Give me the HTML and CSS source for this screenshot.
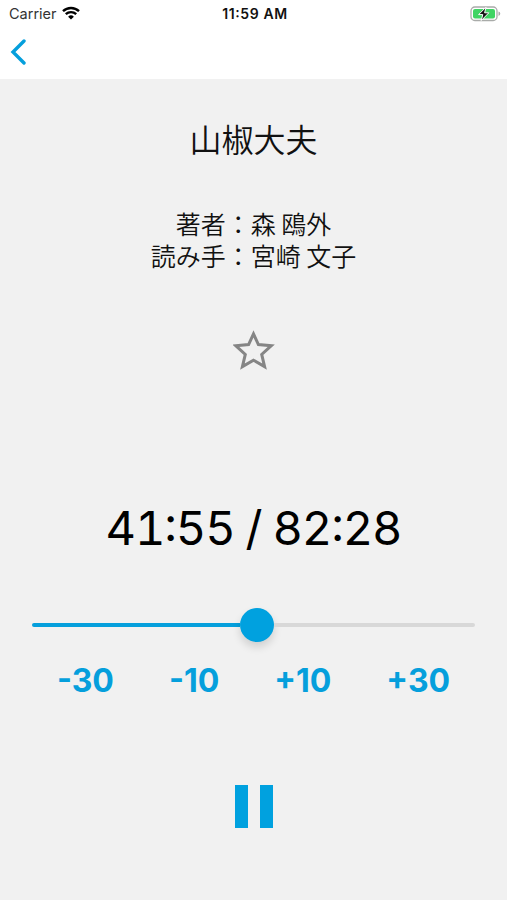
FILE: index.html
```
<!DOCTYPE html>
<html lang="ja">
<head>
<meta charset="UTF-8">
<meta name="viewport" content="width=device-width, initial-scale=1.0">
<title>山椒大夫</title>
<link rel="stylesheet" href="styles.css">
</head>
<body>

<header>
  <div class="status-bar">
    <div class="carrier">
      <span>Carrier</span>
      <svg class="wifi" viewBox="0 0 18 14" width="18" height="14">
        <path d="M1 5.2a11.5 11.5 0 0 1 16 0" />
        <path d="M3.8 8.2a7.6 7.6 0 0 1 10.4 0" />
        <path class="dot" d="M9 13.6L6.1 10.7a4.2 4.2 0 0 1 5.8 0z" />
      </svg>
    </div>
    <span class="clock">11:59 AM</span>
    <svg class="battery" viewBox="0 0 31 16" width="31" height="16">
      <rect x="1" y="1" width="26" height="13.5" rx="3.8" fill="#fff" stroke="#a9aba9" stroke-width="1.3" />
      <rect x="3" y="3" width="22" height="9.5" rx="2" fill="#3fd463" />
      <path d="M28.5 5.6v4.4q1.8-.6 1.8-2.2t-1.8-2.2z" fill="#a9aba9" />
      <path d="M16 1.2L8.6 8.6h4.2L11.2 14.6l7.6-7.8h-4.2z" fill="#111" stroke="#fff" stroke-width="1" />
    </svg>
  </div>
  <nav>
    <button class="back-btn" aria-label="戻る">
      <svg viewBox="0 0 16 26" width="16" height="26"><path d="M14 2L3 13l11 11" /></svg>
    </button>
  </nav>
</header>

<main>
  <h1>山椒大夫</h1>
  <div class="credits">
    <div>著者：森 鴎外</div>
    <div>読み手：宮崎 文子</div>
  </div>
  <button class="star-btn" aria-label="お気に入り">
    <svg viewBox="0 0 42 40" width="42" height="40">
      <path d="M20.5 3.8L25.4 14.6L38.3 15.7L28.7 24.4L31.6 36.6L20.5 30.2L9.4 36.6L12.3 24.4L2.7 15.7L15.6 14.6Z" />
    </svg>
  </button>
  <div class="time"><span>41:55</span><span class="slash">/</span><span>82:28</span></div>
  <div class="slider">
    <div class="played"></div>
    <div class="thumb"></div>
    <div class="remaining"></div>
  </div>
  <div class="skip">
    <button>-30</button>
    <button>-10</button>
    <button>+10</button>
    <button>+30</button>
  </div>
  <button class="pause-btn" aria-label="一時停止">
    <span></span>
    <span></span>
  </button>
</main>

</body>
</html>
```
FILE: styles.css
```
* {
  box-sizing: border-box;
}

body {
  margin: 0;
  min-height: 900px;
  font-family: Inter, "Noto Sans CJK JP", sans-serif;
  background-color: #f1f1f1;
  color: #111;
}

button {
  padding: 0;
  border: none;
  background: none;
  font-family: inherit;
  color: #059fdc;
  cursor: pointer;
}

svg {
  display: block;
}

header {
  height: 79px;
  background-color: #fff;
}

.status-bar {
  display: grid;
  grid-template-columns: 1fr auto 1fr;
  align-items: center;
  height: 27px;
  padding: 0 6px 0 9px;
  font-size: 14px;
  line-height: 27px;
}

.carrier {
  display: flex;
  align-items: center;
  gap: 5px;
  color: #333;
  font-size: 14.5px;
}

.wifi {
  margin-top: -2px;
  fill: none;
  stroke: #000;
  stroke-width: 2.4;
}

.wifi .dot {
  fill: #000;
  stroke: none;
}

.clock {
  font-weight: 600;
  letter-spacing: 0.6px;
  font-feature-settings: "case";
}

.battery {
  justify-self: end;
}

nav {
  padding: 12px 0 0 10px;
}

.back-btn path {
  fill: none;
  stroke: #059fdc;
  stroke-width: 3.4;
  stroke-linecap: round;
}

main {
  display: flex;
  flex-direction: column;
  align-items: center;
}

h1 {
  margin: 35px 0 0;
  font-size: 32px;
  font-weight: 350;
  line-height: 48px;
  font-family: "Noto Sans CJK JP", sans-serif;
}

.credits {
  margin-top: 45px;
  font-family: "Noto Sans CJK JP", sans-serif;
  font-size: 25px;
  font-weight: 350;
  line-height: 32px;
  text-align: center;
}

.star-btn {
  margin-top: 59px;
}

.star-btn path {
  fill: none;
  stroke: #858585;
  stroke-width: 3;
}

.time {
  display: flex;
  gap: 11px;
  margin-top: 130px;
  font-size: 47px;
  line-height: 56px;
  font-feature-settings: "tnum", "case";
  letter-spacing: -1.1px;
  color: #000;
}

.slider {
  display: flex;
  align-items: center;
  width: 443px;
  height: 34px;
  margin-top: 52px;
}

.played {
  width: 208px;
  height: 4px;
  border-radius: 2px 0 0 2px;
  background-color: #059fdc;
}

.thumb {
  width: 34px;
  height: 34px;
  border-radius: 50%;
  background-color: #00a1df;
  box-shadow: 0 5px 9px rgba(0, 0, 0, 0.14);
}

.remaining {
  flex: 1;
  height: 4px;
  border-radius: 0 2px 2px 0;
  background-color: #d8d8d8;
}

.skip {
  display: flex;
  gap: 55px;
  margin-top: 19px;
}

.skip button {
  font-size: 32px;
  font-weight: 700;
  line-height: 40px;
}

.pause-btn {
  display: flex;
  gap: 12px;
  margin-top: 84px;
}

.pause-btn span {
  width: 13px;
  height: 43px;
  background-color: #00a1df;
}
```
